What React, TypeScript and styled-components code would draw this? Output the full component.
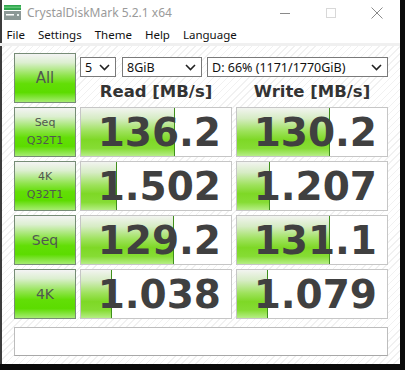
import React from "react";
import styled, { createGlobalStyle } from "styled-components";

const GlobalStyle = createGlobalStyle`
  html, body {
    margin: 0;
    padding: 0;
    background: #0b0b0b;
  }
  body {
    width: 405px;
    height: 370px;
    overflow: hidden;
  }
`;

const Window = styled.div`
  width: 398px;
  height: 364px;
  border-left: 2px solid #3c3c3c;
  background: #fff;
  display: flex;
  flex-direction: column;
  font-family: "Noto Sans", "DejaVu Sans", sans-serif;
`;

const TitleBar = styled.div`
  height: 25px;
  display: flex;
  align-items: center;
  padding-left: 2px;
`;

const TitleText = styled.span`
  margin-left: 5px;
  font-size: 12px;
  color: #9a9a9a;
  flex: 1;
`;

const Controls = styled.div`
  display: flex;
  height: 25px;
`;

const CtrlBtn = styled.div`
  width: 46px;
  display: flex;
  align-items: center;
  justify-content: center;
`;

const MenuBar = styled.div`
  height: 18px;
  display: flex;
  align-items: center;
  padding-left: 0;
  margin-left: -2px;
  border-bottom: 3px solid #f0f0f0;
`;

const MenuItem = styled.span`
  font-size: 11.5px;
  color: #111;
  padding: 0 6.5px;
`;

const Content = styled.div`
  flex: 1;
  padding: 7px 12px 8px 12px;
  background: repeating-linear-gradient(
    -45deg,
    #ffffff 0px,
    #ffffff 4px,
    #f1f1f1 4px,
    #f1f1f1 5px
  );
  display: flex;
  flex-direction: column;
`;

const Grid = styled.div`
  display: grid;
  grid-template-columns: 62px 152px 152px;
  grid-template-rows: repeat(5, 50px);
  column-gap: 4px;
  row-gap: 4px;
`;

const LabelButton = styled.div<{ $size: number }>`
  box-sizing: border-box;
  border: 1px solid #768c76;
  background: linear-gradient(
    to bottom,
    #f4f4f4 0%,
    #dcefd0 18%,
    #8fe44c 45%,
    #62de06 62%,
    #5cdc00 80%,
    #a6ec72 100%
  );
  display: flex;
  flex-direction: column;
  align-items: center;
  justify-content: center;
  font-family: "DejaVu Sans", sans-serif;
  font-size: ${(p) => p.$size}px;
  line-height: ${(p) => (p.$size < 13 ? 18 : 20)}px;
  color: #505850;
`;

const TopPanel = styled.div`
  grid-column: 2 / span 2;
  display: flex;
  flex-direction: column;
`;

const SelectRow = styled.div`
  display: flex;
  margin-top: 4px;
  height: 20px;
`;

const Select = styled.div<{ $w: number; $gap: number }>`
  box-sizing: border-box;
  width: ${(p) => p.$w}px;
  margin-left: ${(p) => p.$gap}px;
  height: 20px;
  border: 1px solid #7a7a7a;
  background: #fff;
  display: flex;
  align-items: center;
  justify-content: space-between;
  padding: 0 5px 0 4px;
  font-size: 12.5px;
  color: #111;
`;

const Headers = styled.div`
  display: grid;
  grid-template-columns: 152px 152px;
  column-gap: 4px;
  flex: 1;
`;

const Header = styled.div`
  display: flex;
  align-items: center;
  justify-content: center;
  font-family: "DejaVu Sans", sans-serif;
  font-weight: bold;
  font-size: 16.5px;
  color: #333;
  padding-top: 2px;
`;

const Cell = styled.div`
  position: relative;
  box-sizing: border-box;
  border: 1px solid #c6c6c6;
  background: #fff;
  overflow: hidden;
  display: flex;
  align-items: center;
  justify-content: flex-end;
  padding-right: 10px;
`;

const Bar = styled.div`
  position: absolute;
  left: 0;
  top: 0;
  bottom: 0;
  border-right: 1px solid #3f8f1c;
  background: linear-gradient(
    to bottom,
    #f2f4f0 0%,
    #d6ecc4 22%,
    #9ee25c 48%,
    #7ed826 66%,
    #86dc34 84%,
    #b6ee86 100%
  );
`;

const Value = styled.span`
  position: relative;
  font-family: "DejaVu Sans", sans-serif;
  font-weight: bold;
  font-size: 39px;
  line-height: 1;
  color: #404040;
`;

const Comment = styled.div`
  margin-top: 8px;
  height: 29px;
  box-sizing: border-box;
  border: 1px solid #bdbdbd;
  border-bottom-color: #a8a8a8;
  background: #fff;
`;

const Chevron = () => (
  <svg width="11" height="7" viewBox="0 0 11 7">
    <polyline points="1,1 5.5,5.5 10,1" fill="none" stroke="#222" strokeWidth="1.6" />
  </svg>
);

const DriveIcon = () => (
  <svg width="18" height="16" viewBox="0 0 18 16">
    <rect x="0" y="0" width="17" height="5" fill="#2ea64c" />
    <rect x="0" y="1.5" width="17" height="1.5" fill="#5cc474" />
    <rect x="0" y="6" width="17" height="9" fill="#8c9896" />
    <rect x="2" y="9" width="8" height="1.5" fill="#ffffff" />
    <rect x="13" y="9" width="2" height="2" fill="#e8f0ee" />
  </svg>
);

const rows = [
  { label: ["Seq", "Q32T1"], read: "136.2", write: "130.2", rw: 62, ww: 61 },
  { label: ["4K", "Q32T1"], read: "1.502", write: "1.207", rw: 23, ww: 21 },
  { label: ["Seq"], read: "129.2", write: "131.1", rw: 61, ww: 61 },
  { label: ["4K"], read: "1.038", write: "1.079", rw: 20, ww: 20 },
];

function App() {
  return (
    <>
      <GlobalStyle />
      <Window>
        <TitleBar>
          <DriveIcon />
          <TitleText>CrystalDiskMark 5.2.1 x64</TitleText>
          <Controls>
            <CtrlBtn>
              <svg width="10" height="10" viewBox="0 0 10 10">
                <line x1="0" y1="5.5" x2="10" y2="5.5" stroke="#8a8a8a" strokeWidth="1" />
              </svg>
            </CtrlBtn>
            <CtrlBtn>
              <svg width="10" height="10" viewBox="0 0 10 10">
                <rect x="0.5" y="0.5" width="9" height="9" fill="none" stroke="#d8d8d8" strokeWidth="1" />
              </svg>
            </CtrlBtn>
            <CtrlBtn>
              <svg width="12" height="12" viewBox="0 0 12 12">
                <path d="M0.5 0.5 L11.5 11.5 M11.5 0.5 L0.5 11.5" stroke="#8a8a8a" strokeWidth="1" />
              </svg>
            </CtrlBtn>
          </Controls>
        </TitleBar>
        <MenuBar>
          <MenuItem>File</MenuItem>
          <MenuItem>Settings</MenuItem>
          <MenuItem>Theme</MenuItem>
          <MenuItem>Help</MenuItem>
          <MenuItem>Language</MenuItem>
        </MenuBar>
        <Content>
          <Grid>
            <LabelButton $size={15}>All</LabelButton>
            <TopPanel>
              <SelectRow>
                <Select $w={36} $gap={0}>
                  <span>5</span>
                  <Chevron />
                </Select>
                <Select $w={80} $gap={6}>
                  <span>8GiB</span>
                  <Chevron />
                </Select>
                <Select $w={181} $gap={5}>
                  <span>D: 66% (1171/1770GiB)</span>
                  <Chevron />
                </Select>
              </SelectRow>
              <Headers>
                <Header>Read [MB/s]</Header>
                <Header>Write [MB/s]</Header>
              </Headers>
            </TopPanel>
            {rows.map((r) => (
              <React.Fragment key={r.label.join("-")}>
                <LabelButton $size={r.label.length > 1 ? 11 : 14}>
                  {r.label.map((l) => (
                    <span key={l}>{l}</span>
                  ))}
                </LabelButton>
                <Cell>
                  <Bar style={{ width: `${r.rw}%` }} />
                  <Value>{r.read}</Value>
                </Cell>
                <Cell>
                  <Bar style={{ width: `${r.ww}%` }} />
                  <Value>{r.write}</Value>
                </Cell>
              </React.Fragment>
            ))}
          </Grid>
          <Comment />
        </Content>
      </Window>
    </>
  );
}

export default App;
